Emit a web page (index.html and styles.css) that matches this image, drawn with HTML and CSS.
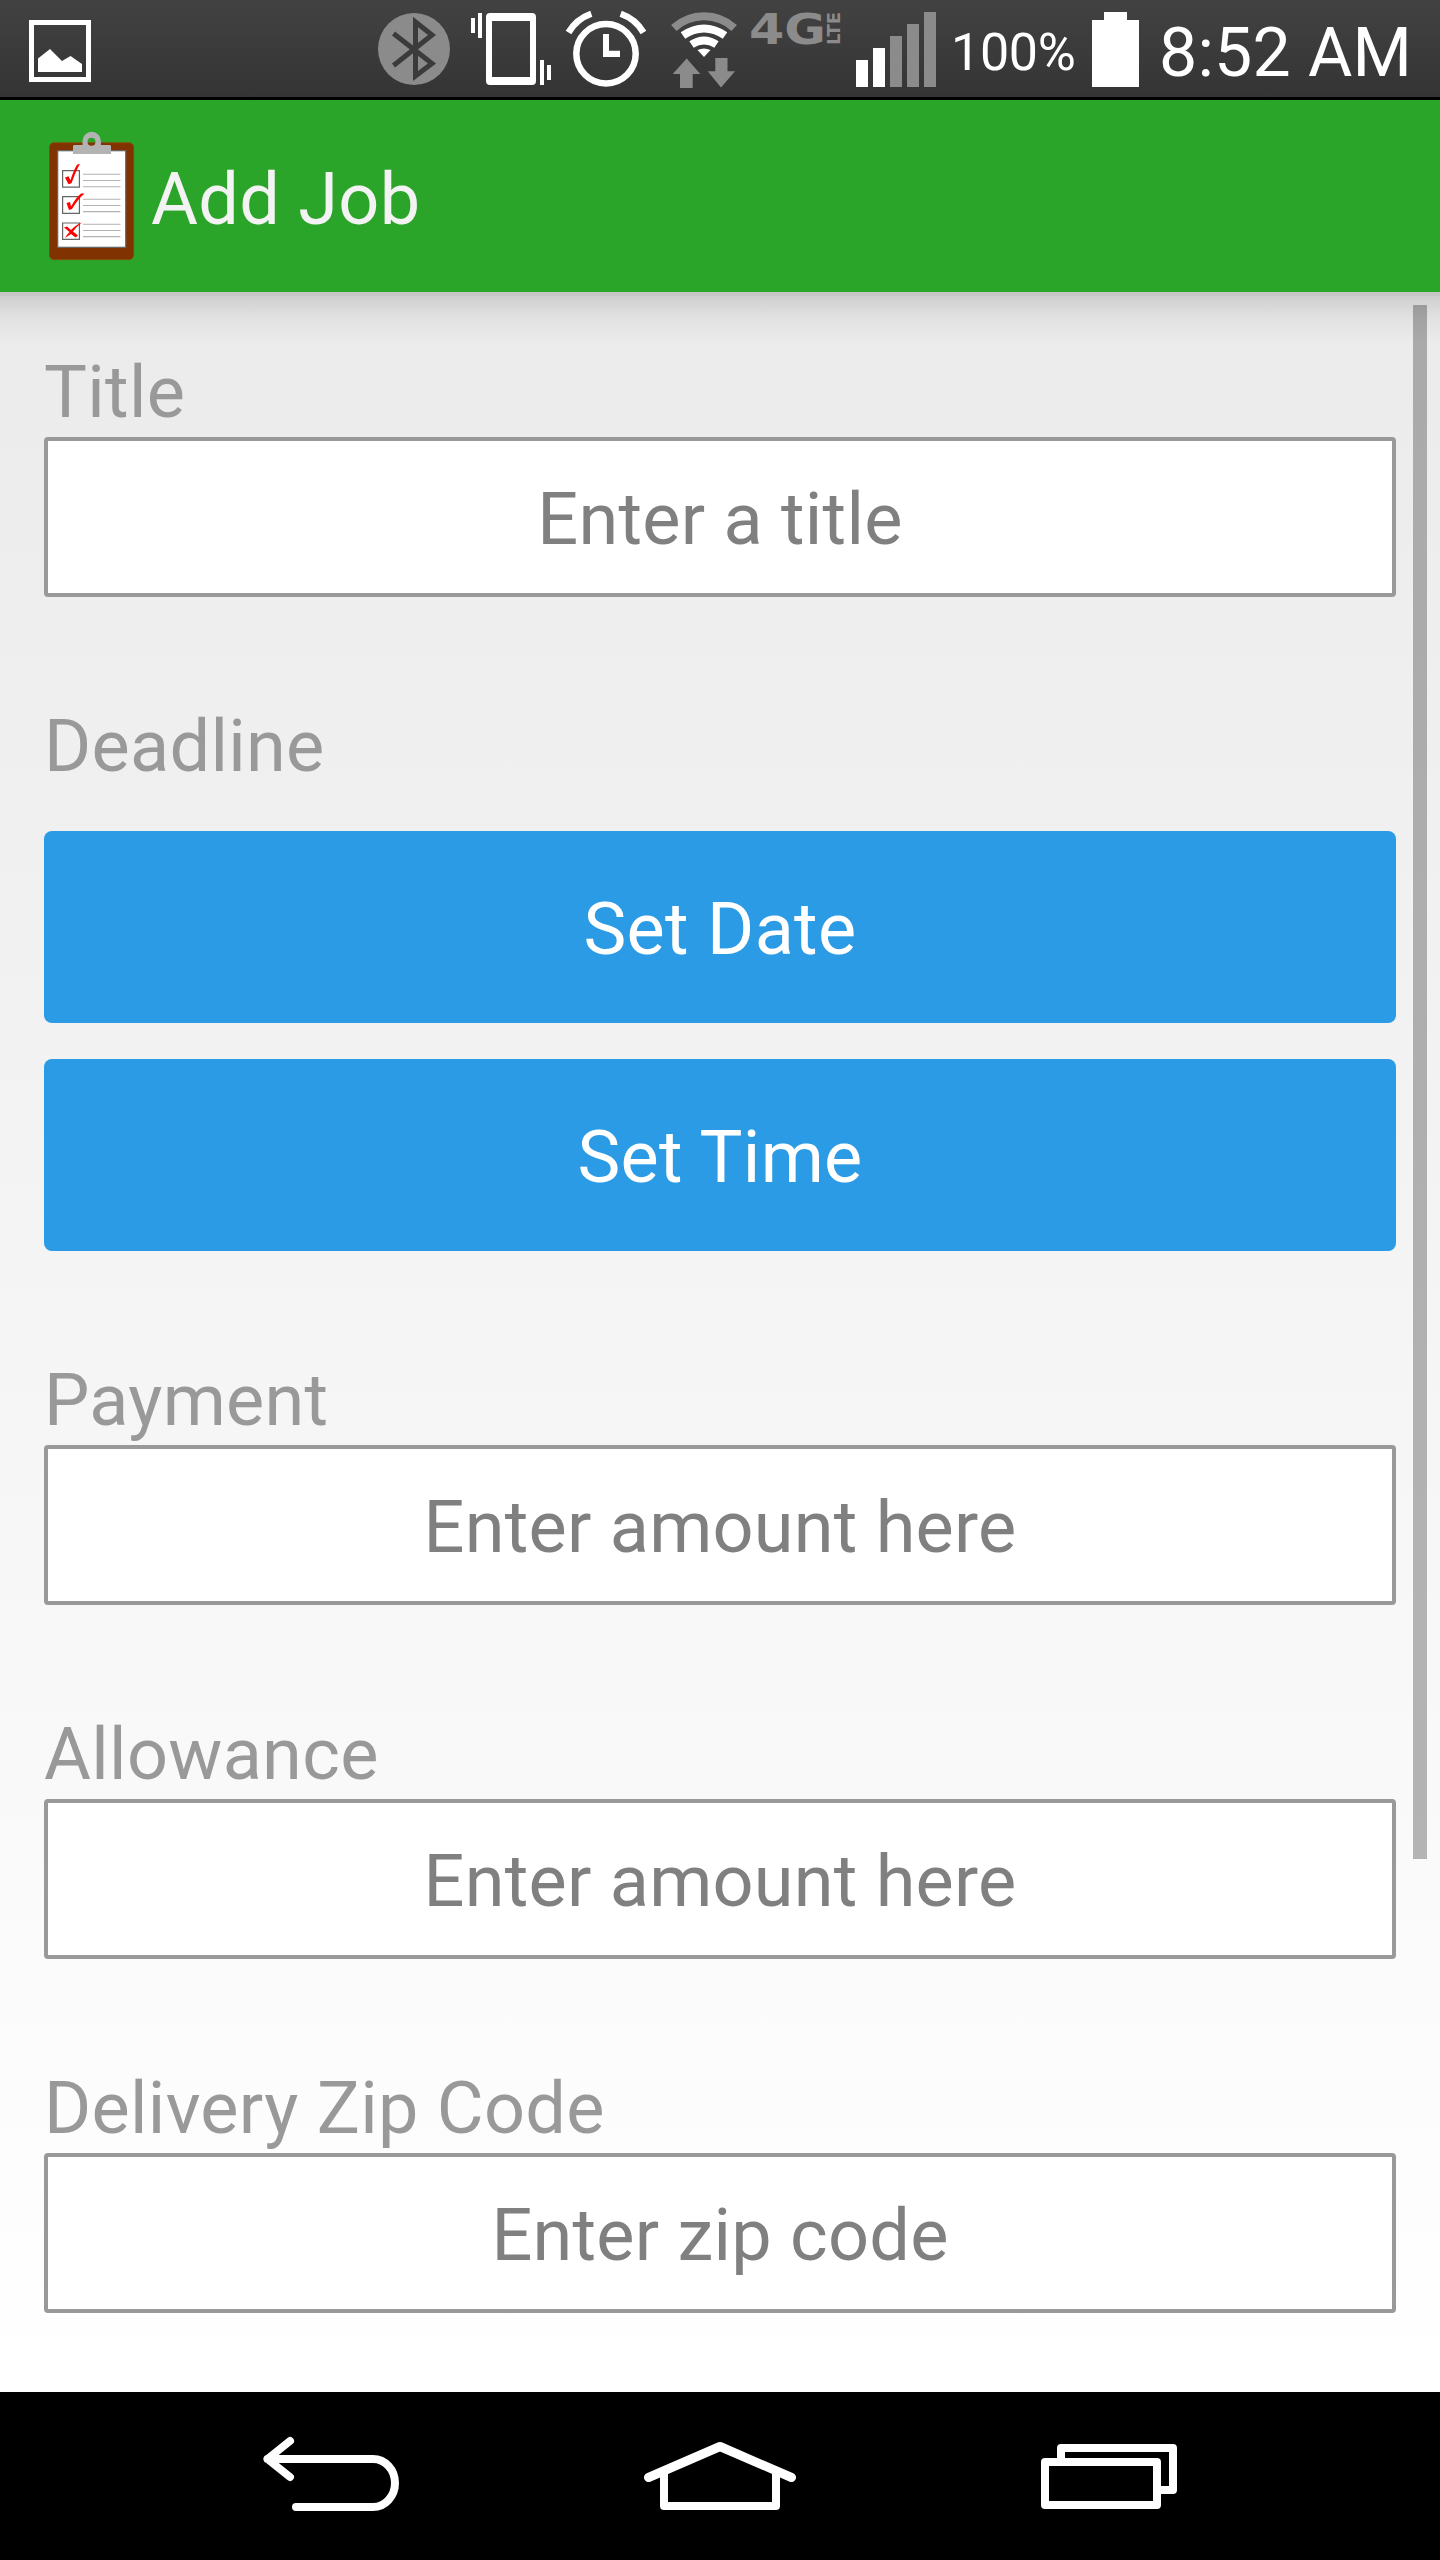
FILE: index.html
```html
<!DOCTYPE html>
<html lang="en">
<head>
<meta charset="utf-8">
<title>Add Job</title>
<link rel="stylesheet" href="styles.css">
</head>
<body>
<div class="screen">
  <header class="status">
    <svg class="status-note" width="62" height="62" viewBox="29 20 62 62">
      <rect x="31.5" y="22.5" width="57" height="57" fill="none" stroke="#fff" stroke-width="5"/>
      <path d="M38 72V58.500L50 49l12 12 8.500-5L82 64v8z" fill="#fff"/>
    </svg>
    <svg class="status-icons" width="570" height="97" viewBox="370 0 570 97">
      <circle cx="414" cy="49" r="36" fill="#8b8b8b"/>
      <path d="M393.500 33.500 432 63.500 415.500 76V22L432 35 393.500 65.500" fill="none" stroke="#3b3b3b" stroke-width="5"/>
      <g fill="#fff">
        <path d="M471 18h4v15h-4zM478 13h4v25h-4zM540 60h4v25h-4zM547 65h4v15h-4z"/>
        <path fill-rule="evenodd" d="M490 13h42q4 0 4 4v64q0 4-4 4h-42q-4 0-4-4V17q0-4 4-4zM492 21v56h38V21z"/>
        <path d="M603 34h6v16.700h11V57h-17z"/>
        <path d="M704 57l-6.500-7q6.500-3 13 0z"/>
        <path d="M856 60h12v27h-12zM873 48h12v39h-12z"/>
      </g>
      <g fill="none" stroke="#fff">
        <circle cx="606" cy="53.700" r="29.700" stroke-width="6.500"/>
        <path d="M568.500 32.500A43 43 0 0 1 591.300 13.800M643.500 32.500A43 43 0 0 0 620.700 13.800" stroke-width="6.500"/>
        <path d="M683 35.500Q704 21.500 725 35.500M691.500 44.500Q704 36.500 716.500 44.500" stroke-width="8"/>
      </g>
      <path d="M673.800 28A45 45 0 0 1 734.200 28" fill="none" stroke="#8b8b8b" stroke-width="8"/>
      <g fill="#8b8b8b">
        <path d="M686.700 58.500 700.300 74h-7.600v14H680V74h-7.300zM715.300 58h12.200v13.300H735L721 87.500 707.700 71.300h7.600z"/>
        <path d="M890 36h12v51h-12zM907 24h12v63h-12zM924 12h12v75h-12z"/>
      </g>
      <g class="network">
        <text x="749" y="44" font-size="43" textLength="77" lengthAdjust="spacingAndGlyphs">4G</text>
        <text transform="translate(840 45) rotate(-90)" font-size="18" textLength="33" lengthAdjust="spacingAndGlyphs">LTE</text>
      </g>
    </svg>
    <span class="percent">100%</span>
    <svg class="battery" width="47" height="75" viewBox="0 0 47 75"><path d="M12 0h23v8h12v67H0V8h12z" fill="#fff"/></svg>
    <span class="clock">8:52 AM</span>
  </header>

  <div class="appbar">
    <svg class="clipboard" width="86" height="130" viewBox="49 131 86 130">
      <rect x="49.400" y="142.800" width="84.200" height="116.800" rx="4.500" fill="#803300" stroke="#8f4405" stroke-width=".8"/>
      <rect x="57.700" y="150.700" width="68" height="96.600" fill="#fff" stroke="#666" stroke-width="1.200"/>
      <path fill="#b3b3b3" fill-rule="evenodd" d="M74 145h8.500v-4a9.200 9.200 0 0 1 18.400 0v4H110l1 1v8H73v-8zM91.500 137.800a4 4 0 1 0 0 8 4 4 0 0 0 0-8z"/>
      <path d="M62.600 170.700h16.800v16.400H62.600zM62.600 196.700h16.800v16.600H62.600zM62.600 223h16.800v16.400H62.600z" fill="#fff" stroke="#666" stroke-width="1.200"/>
      <path d="M83 174.300h37.500M83 180.500h37.500M83 186.700h37.500M83 199.300h37.500M83 205.500h37.500M83 211.600h37.500M83 224.300h37.500M83 230.500h37.500M83 236.600h37.500" stroke="#b3b3b3" stroke-width="1.100"/>
      <g fill="#f00">
        <path d="M65 177.500l3.500-1.200 2 4q3-10 6.500-15.500l3-1q-4 7-8.500 19.500l-3 1z"/>
        <path d="M66.500 203l3.500-1 1 4.500q5-9 10-13h3.500q-6.500 5.500-12.500 15.500l-3 1z"/>
        <path d="M64 227.500l3-1 4 3.500q5-5.500 11-7.500-5.500 4-9 9l5 4-2.500 2-4.500-3.500-6 4q2-3.500 4.500-6z"/>
      </g>
    </svg>
    <h1>Add Job</h1>
  </div>

  <main class="form">
    <section class="field">
      <label for="title">Title</label>
      <input id="title" placeholder="Enter a title">
    </section>
    <section class="field deadline">
      <span class="label">Deadline</span>
      <button type="button">Set Date</button>
      <button type="button">Set Time</button>
    </section>
    <section class="field">
      <label for="payment">Payment</label>
      <input id="payment" placeholder="Enter amount here">
    </section>
    <section class="field">
      <label for="allowance">Allowance</label>
      <input id="allowance" placeholder="Enter amount here">
    </section>
    <section class="field">
      <label for="zip">Delivery Zip Code</label>
      <input id="zip" placeholder="Enter zip code">
    </section>
    <div class="scrollbar"></div>
  </main>

  <nav class="navbar">
    <svg width="140" height="80" viewBox="260 2436 140 80"><path d="M290 2441 267.500 2459 290 2477M267.500 2459H373A22 24 0 0 1 373 2507H296" stroke-linecap="round"/></svg>
    <svg width="154" height="80" viewBox="643 2436 154 80"><path d="M648.500 2477.500 720 2446.500 791.500 2477.500" stroke-width="9" stroke-linecap="round"/><path d="M664 2472V2506H776V2472"/></svg>
    <svg width="140" height="80" viewBox="1039 2436 140 80"><path d="M1061 2458V2448H1173V2490H1161M1045 2462H1157V2505H1045Z"/></svg>
  </nav>
</div>
</body>
</html>
```
FILE: styles.css
```css
* { box-sizing: border-box; }

body {
  margin: 0;
  font-family: Roboto, "Noto Sans", sans-serif;
  background: #000;
}

.screen {
  width: 1440px;
  height: 2560px;
  display: flex;
  flex-direction: column;
  overflow: hidden;
}

.status {
  height: 100px;
  flex: none;
  display: flex;
  align-items: flex-start;
  border-bottom: 3px solid #000;
  background: linear-gradient(#424242, #343434);
  color: #fff;
  white-space: nowrap;
}

.status-note { margin: 20px 0 0 29px; flex: none; }
.status-icons { margin-left: 279px; flex: none; }

.network {
  fill: #8b8b8b;
  font-family: "DejaVu Sans", sans-serif;
  font-weight: bold;
}

.percent {
  width: 152px;
  padding: 21px 0 0 11px;
  font-size: 52px;
  line-height: 64px;
  letter-spacing: -0.3px;
}

.battery { margin-top: 12px; flex: none; }

.clock {
  padding: 13px 0 0 20px;
  font-size: 68px;
  line-height: 80px;
  letter-spacing: 0.2px;
}

.appbar {
  height: 192px;
  flex: none;
  display: flex;
  align-items: flex-start;
  padding: 31px 49px 0;
  background: #2aa52a;
}

.appbar h1 {
  margin: 27px 0 0 16px;
  font-size: 72px;
  font-weight: 400;
  line-height: 84px;
  letter-spacing: 0.3px;
  color: #f3f3f3;
}

.form {
  position: relative;
  height: 2100px;
  flex: none;
  display: flex;
  flex-direction: column;
  gap: 107px;
  padding: 58px 44px 0;
  background:
    linear-gradient(rgba(0, 0, 0, 0.155), rgba(0, 0, 0, 0.155)) top / 100% 4px no-repeat,
    linear-gradient(rgba(0, 0, 0, 0.12), rgba(0, 0, 0, 0.045) 45%, rgba(0, 0, 0, 0)) 0 4px / 100% 48px no-repeat,
    linear-gradient(#ebebeb, #fff);
}

.field {
  display: flex;
  flex-direction: column;
  gap: 1px;
}

.field label,
.field .label {
  font-size: 72px;
  line-height: 86px;
  letter-spacing: 0.3px;
  color: #999;
}

.field input {
  width: 100%;
  height: 160px;
  padding: 5px 0 0;
  border: 4px solid #999;
  border-radius: 4px;
  background: #fff;
  font: 400 72px Roboto, "Noto Sans", sans-serif;
  letter-spacing: 0.25px;
  text-align: center;
}

.field input::placeholder { color: #808080; opacity: 1; }

.deadline { gap: 36px; }
.deadline .label { margin-bottom: 5px; }

.field button {
  height: 192px;
  padding: 5px 0 0;
  border: 0;
  border-radius: 8px;
  background: #2c9be6;
  color: #fff;
  font: 400 72px Roboto, "Noto Sans", sans-serif;
  letter-spacing: 0.3px;
}

.scrollbar {
  position: absolute;
  top: 13px;
  right: 13px;
  width: 14px;
  height: 1554px;
  background: rgba(0, 0, 0, 0.28);
}

.navbar {
  height: 168px;
  flex: none;
  display: flex;
  align-items: flex-start;
  justify-content: space-between;
  padding: 44px 261px 0 260px;
  background: #000;
}

.navbar svg {
  fill: none;
  stroke: #fff;
  stroke-width: 8;
  stroke-linejoin: round;
}
```
